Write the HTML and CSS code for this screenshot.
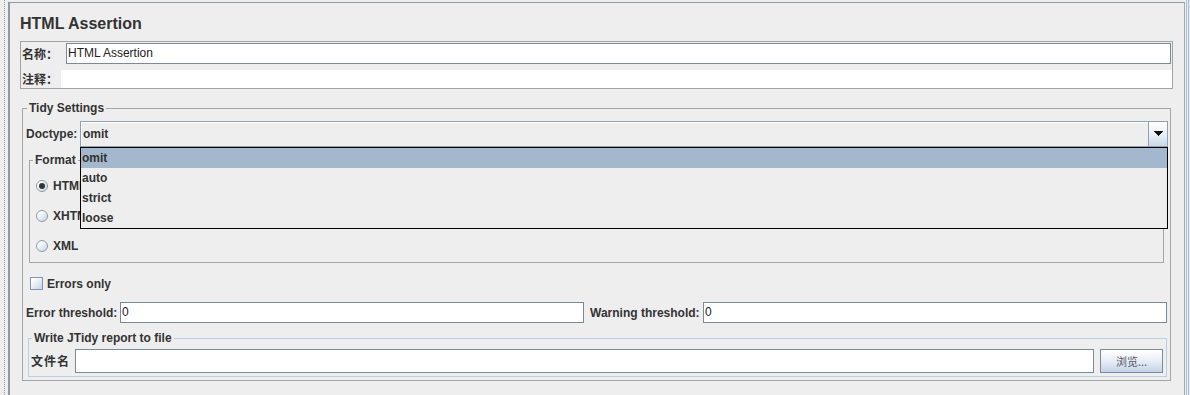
FILE: index.html
```html
<!DOCTYPE html>
<html>
<head>
<meta charset="utf-8">
<link rel="stylesheet" href="styles.css">
</head>
<body>
<div class="app">
  <div class="gutter"><div class="dots"></div></div>
  <div class="main">
    <h1 class="title">HTML Assertion</h1>
    <div class="namebox">
      <div class="name-row">
        <span class="lbl cjk lbl-name">名称：</span>
        <div class="field">HTML Assertion</div>
      </div>
      <div class="comment-row">
        <span class="lbl cjk lbl-comment">注释：</span>
        <div class="comment"></div>
      </div>
    </div>
    <fieldset class="group tidy">
      <legend>Tidy Settings</legend>
      <div class="doctype-row">
        <span class="lbl doctype-lbl">Doctype:</span>
        <div class="combo">
          <div class="combo-value">omit</div>
          <div class="combo-btn">
            <svg width="10" height="5" viewBox="0 0 10 5" shape-rendering="crispEdges"><polygon points="0,0 10,0 5,5" fill="#111"/></svg>
          </div>
          <ul class="popup">
            <li class="sel">omit</li>
            <li>auto</li>
            <li>strict</li>
            <li>loose</li>
          </ul>
        </div>
      </div>
      <fieldset class="group format">
        <legend>Format</legend>
        <div class="radio-row"><span class="radio checked"></span><span class="lbl">HTML</span></div>
        <div class="radio-row"><span class="radio"></span><span class="lbl">XHTML</span></div>
        <div class="radio-row"><span class="radio"></span><span class="lbl">XML</span></div>
      </fieldset>
      <div class="check-row"><span class="checkbox"></span><span class="lbl">Errors only</span></div>
      <div class="thresh-row">
        <span class="lbl">Error threshold:</span>
        <div class="tfield">0</div>
        <span class="lbl lbl-warn">Warning threshold:</span>
        <div class="tfield">0</div>
      </div>
      <fieldset class="group write">
        <legend>Write JTidy report to file</legend>
        <div class="file-row">
          <span class="lbl cjk lbl-file">文件名</span>
          <div class="ffield"></div>
          <div class="browse">浏览...</div>
        </div>
      </fieldset>
    </fieldset>
  </div>
  <div class="rightstrip"></div>
</div>
</body>
</html>
```

FILE: styles.css
```css
* { box-sizing: border-box; }
html, body { margin: 0; padding: 0; }
body {
  width: 1190px;
  height: 395px;
  overflow: hidden;
  background: #eeeeee;
  font-family: "Liberation Sans", Arial, "Noto Sans CJK SC", sans-serif;
  font-size: 12px;
  color: #333333;
}
.app { display: flex; height: 395px; }
.gutter { width: 8px; flex: none; padding-left: 4px; }
.dots { height: 100%; border-left: 1px dotted #9a9a9a; }
.main {
  flex: 1;
  min-width: 0;
  margin-top: 2px;
  border-top: 1px solid #8d9aa8;
  border-left: 2px solid #8d9aa8;
  border-right: 1px solid #a3abb3;
  display: flex;
  flex-direction: column;
}
.rightstrip {
  width: 5px;
  flex: none;
  background: linear-gradient(to right, #eeeeee 0 1px, #a9bdd3 1px 2px, #e6eef6 2px 3px, #a9bdd3 3px 4px, #dfe8f2 4px 5px);
}
.title {
  margin: 11px 0 0 10px;
  font-size: 16px;
  line-height: 20px;
  font-weight: bold;
  color: #333;
}
.lbl { font-weight: bold; line-height: 14px; white-space: nowrap; }
.cjk { font-family: "Noto Sans CJK SC", sans-serif; }

.namebox {
  margin: 7px 11px 0 10px;
  border: 1px solid #a3a3a3;
}
.name-row { display: flex; align-items: center; height: 21px; margin-top: 1px; }
.lbl-name { width: 44px; margin-left: 1px; }
.field {
  flex: 1;
  height: 21px;
  margin-right: 1px;
  border: 1px solid #7a8a99;
  background: #fff;
  padding-left: 1px;
  line-height: 19px;
  color: #222;
}
.comment-row { display: flex; align-items: center; height: 18px; margin-top: 6px; }
.lbl-comment { width: 39px; margin-left: 1px; }
.comment { flex: 1; height: 18px; background: #fff; }

fieldset.group {
  margin: 0;
  padding: 0;
  min-width: 0;
  border: 1px solid #a5a5a5;
}
.group > legend {
  padding: 0 2px;
  line-height: 14px;
  font-weight: bold;
  color: #333;
}
.tidy { margin: 12px 13px 0 12px !important; padding: 6px 2px 3px 3px !important; }
.tidy > legend { margin-left: 1px; }

.doctype-row { display: flex; align-items: center; height: 26px; }
.doctype-lbl { width: 54px; }
.combo {
  flex: 1;
  position: relative;
  height: 26px;
  border: 1px solid #8fa1b6;
  background: #eeeeee;
  display: flex;
}
.combo-value {
  flex: 1;
  padding-left: 2px;
  line-height: 24px;
  font-weight: bold;
  box-shadow: inset 1px 1px 0 #ffffff;
}
.combo-btn {
  width: 19px;
  border-left: 1px solid #8fa1b6;
  background: linear-gradient(#ffffff, #eef3f8 45%, #c9d8e8);
  display: flex;
  align-items: center;
  justify-content: center;
}
.combo-btn svg { display: block; margin-top: -1px; }
.popup {
  position: absolute;
  z-index: 10;
  left: -1px;
  right: -1px;
  top: calc(100% + 1px);
  margin: 0;
  padding: 0;
  list-style: none;
  border: 1px solid #000;
  background: #eeeeee;
}
.popup li {
  height: 20px;
  line-height: 20px;
  padding-left: 1px;
  font-weight: bold;
  color: #333;
}
.popup li.sel { background: #a3b8cc; }

.format { margin: 6px 4px 0 3px !important; padding: 4px 0 1px 3px !important; }
.radio-row { display: flex; align-items: center; height: 30px; margin-left: 3px; }
.radio {
  position: relative;
  width: 12px;
  height: 12px;
  border-radius: 50%;
  border: 1px solid #8c99a6;
  background: linear-gradient(135deg, #ffffff 20%, #c5d3e3);
  margin-right: 5px;
}
.radio.checked::after {
  content: "";
  position: absolute;
  left: 2px;
  top: 2px;
  width: 6px;
  height: 6px;
  border-radius: 50%;
  background: #333;
}

.check-row { display: flex; align-items: center; height: 13px; margin: 14px 0 0 4px; }
.checkbox {
  width: 13px;
  height: 13px;
  border: 1px solid #8096ad;
  background: linear-gradient(135deg, #ffffff 15%, #c3d3e4);
  margin-right: 4px;
}

.thresh-row {
  display: grid;
  grid-template-columns: 94px 1fr 119px 1fr;
  align-items: center;
  height: 21px;
  margin: 12px 1px 0 0;
}
.lbl-warn { padding-left: 6px; }
.tfield {
  height: 21px;
  border: 1px solid #7a8a99;
  background: #fff;
  padding-left: 1px;
  line-height: 19px;
  color: #222;
}

.write {
  margin: 8px 1px 0 2px !important;
  padding: 4px 3px 3px 2px !important;
  border-color: #b8cfe5 !important;
}
.write > legend { margin-left: 1px; }
.file-row { display: flex; align-items: center; height: 24px; }
.lbl-file { width: 44px; letter-spacing: 1px; }
.ffield {
  flex: 1;
  height: 24px;
  border: 1px solid #7a8a99;
  background: #fff;
}
.browse {
  width: 63px;
  height: 24px;
  margin-left: 6px;
  border: 1px solid #7a8a99;
  background: linear-gradient(#ffffff, #edf2f8 40%, #c3d4e7);
  font-family: "Noto Sans CJK SC", sans-serif;
  font-size: 11px;
  color: #556;
  display: flex;
  align-items: center;
  justify-content: center;
}
```
